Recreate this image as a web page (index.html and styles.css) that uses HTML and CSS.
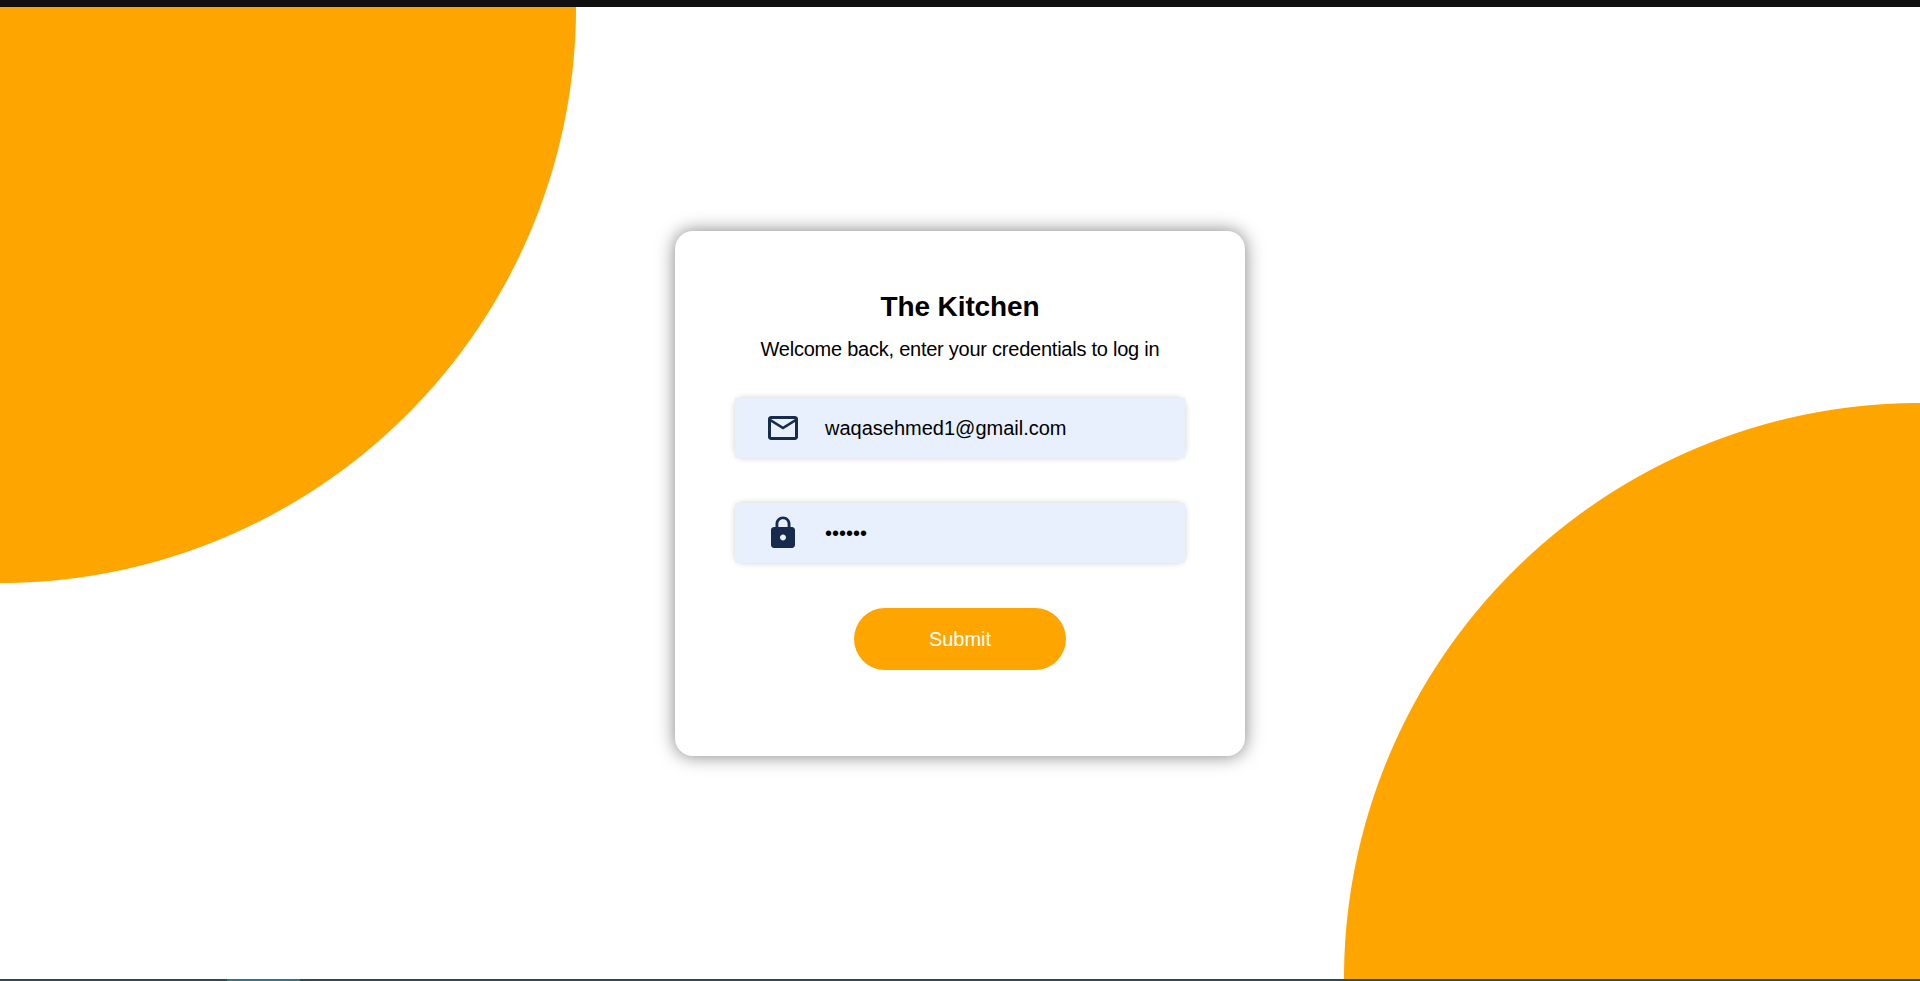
FILE: index.html
```html
<!DOCTYPE html>
<html lang="en">
<head>
<meta charset="utf-8">
<title>The Kitchen</title>
<link rel="stylesheet" href="styles.css">
</head>
<body>
<div class="topbar"></div>
<main class="page">
  <form class="card">
    <h1 class="title">The Kitchen</h1>
    <p class="subtitle">Welcome back, enter your credentials to log in</p>
    <div class="field">
      <div class="field-inner">
        <svg class="icon" viewBox="0 0 24 24"><path d="M22 6c0-1.100-.9-2-2-2H4c-1.100 0-2 .9-2 2v12c0 1.100.9 2 2 2h16c1.100 0 2-.9 2-2V6zm-2 0l-8 5-8-5h16zm0 12H4V8l8 5 8-5v10z"/></svg>
        <span class="value">waqasehmed1@gmail.com</span>
      </div>
    </div>
    <div class="field">
      <div class="field-inner">
        <svg class="icon" viewBox="0 0 24 24"><path d="M18 8h-1V6c0-2.760-2.240-5-5-5S7 3.240 7 6v2H6c-1.100 0-2 .9-2 2v10c0 1.100.9 2 2 2h12c1.100 0 2-.9 2-2V10c0-1.100-.9-2-2-2zm-6 9c-1.100 0-2-.9-2-2s.9-2 2-2 2 .9 2 2-.9 2-2 2zm3.100-9H8.900V6c0-1.710 1.390-3.100 3.100-3.100s3.100 1.390 3.100 3.100v2z"/></svg>
        <span class="value">••••••</span>
      </div>
    </div>
    <button class="submit" type="button">Submit</button>
  </form>
</main>
<div class="taskbar"><div class="task"></div></div>
</body>
</html>
```
FILE: styles.css
```css
* { box-sizing: border-box; }
body {
  margin: 0;
  height: 981px;
  display: flex;
  flex-direction: column;
  overflow: hidden;
  background: #fff;
  font-family: "Liberation Sans", Arial, sans-serif;
}
.topbar { height: 7px; background: #101010; }
.page {
  height: 972px;
  padding-top: 1px;
  display: flex;
  align-items: center;
  justify-content: center;
  background:
    radial-gradient(circle at 0 0, #ffa500 575.5px, transparent 576.5px),
    radial-gradient(circle at 100% 100%, #ffa500 575.5px, transparent 576.5px),
    #fff;
}
.card {
  width: 570px;
  height: 525px;
  padding: 60px 60px 0;
  display: flex;
  flex-direction: column;
  align-items: center;
  border-radius: 18px;
  background: #fff;
  box-shadow: 0 0 18px rgba(0, 0, 0, .5);
}
.title { margin: 0; font-size: 28px; line-height: 32px; font-weight: 700; letter-spacing: -.1px; }
.subtitle { margin: 14px 0 0; font-size: 20px; line-height: 24px; letter-spacing: -.24px; white-space: nowrap; }
.field {
  width: 100%;
  height: 60px;
  margin-top: 37px;
  border-radius: 8px;
  box-shadow: 0 0 6px rgba(0, 0, 0, .2);
}
.field + .field { margin-top: 45px; }
.field-inner {
  height: 100%;
  padding-left: 30px;
  display: flex;
  align-items: center;
  gap: 24px;
  background: #e8f0fe;
}
.icon { width: 36px; height: 36px; fill: #172b4d; }
.value { font-size: 20px; line-height: 24px; }
.submit {
  width: 212px;
  height: 62px;
  margin-top: 45px;
  padding: 1px 0 0;
  border: 0;
  border-radius: 31px;
  background: #ffa500;
  color: #fff;
  font: 20px "Liberation Sans", Arial, sans-serif;
}
.taskbar { height: 2px; padding-left: 227px; background: #274c58; }
.task { width: 73px; height: 2px; background: #267b8f; }
```
